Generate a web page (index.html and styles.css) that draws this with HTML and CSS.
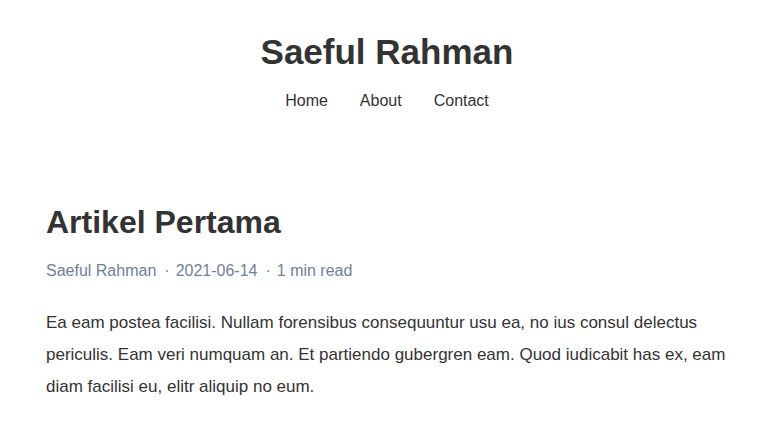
FILE: index.html
```html
<!DOCTYPE html>
<html lang="id">
<head>
<meta charset="utf-8">
<title>Saeful Rahman</title>
<link rel="stylesheet" href="styles.css">
</head>
<body>
<div class="page">
  <header class="site-header">
    <h1 class="site-title">Saeful Rahman</h1>
    <nav class="site-nav">
      <a href="#">Home</a>
      <a href="#">About</a>
      <a href="#">Contact</a>
    </nav>
  </header>
  <main class="content">
    <article class="post">
      <h2 class="post-title">Artikel Pertama</h2>
      <div class="post-meta">
        <span>Saeful Rahman</span><span class="sep">·</span><span>2021-06-14</span><span class="sep">·</span><span>1 min read</span>
      </div>
      <p class="post-body">Ea eam postea facilisi. Nullam forensibus consequuntur usu ea, no ius consul delectus periculis. Eam veri numquam an. Et partiendo gubergren eam. Quod iudicabit has ex, eam diam facilisi eu, elitr aliquip no eum.</p>
    </article>
  </main>
</div>
</body>
</html>
```
FILE: styles.css
```css
html, body {
  margin: 0;
  padding: 0;
  background: #fff;
  color: #333;
  font-family: "Liberation Sans", Arial, sans-serif;
}
.page {
  padding: 0 39px 0 46px;
}
.site-header {
  display: flex;
  flex-direction: column;
  align-items: center;
  padding-top: 32px;
}
.site-title {
  margin: 0;
  font-size: 35px;
  line-height: 40px;
  font-weight: bold;
  color: #333;
}
.site-nav {
  display: flex;
  gap: 32px;
  margin-top: 19px;
  font-size: 16px;
  line-height: 20px;
}
.site-nav a {
  color: #333;
  text-decoration: none;
}
.content {
  margin-top: 91px;
}
.post-title {
  margin: 0;
  font-size: 32px;
  line-height: 40px;
  font-weight: bold;
  color: #333;
}
.post-meta {
  margin-top: 19px;
  font-size: 16px;
  line-height: 20px;
  color: #718096;
}
.post-meta .sep {
  margin: 0 6px 0 8px;
}
.post-body {
  margin: 26px 0 0;
  font-size: 17px;
  line-height: 32px;
  color: #333;
}
```
